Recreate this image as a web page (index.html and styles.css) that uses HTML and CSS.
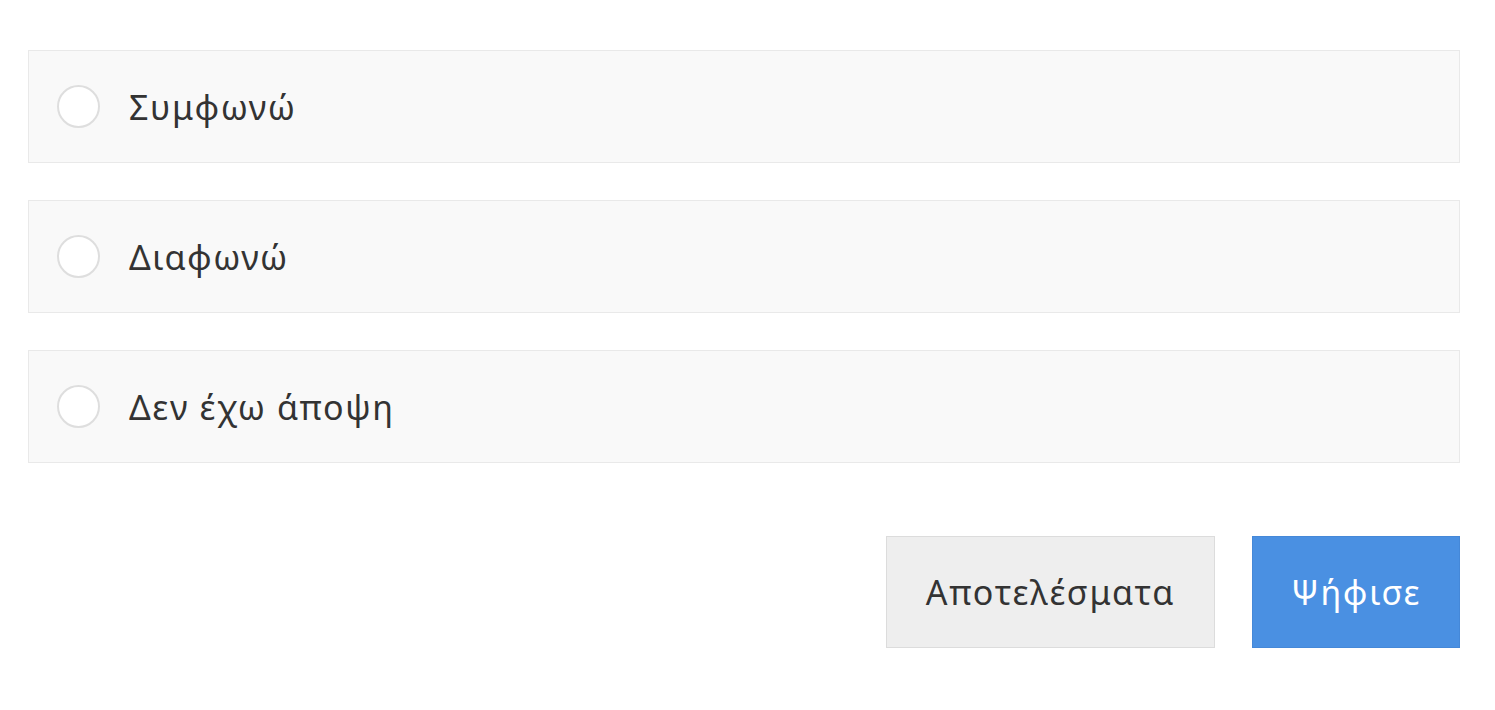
FILE: index.html
```html
<!DOCTYPE html>
<html lang="el">
<head>
<meta charset="utf-8">
<link rel="stylesheet" href="styles.css">
</head>
<body>
<form class="poll">
  <label class="option"><span class="radio"></span><span class="label">Συμφωνώ</span></label>
  <label class="option"><span class="radio"></span><span class="label">Διαφωνώ</span></label>
  <label class="option"><span class="radio"></span><span class="label">Δεν έχω άποψη</span></label>
  <div class="actions">
    <button type="button" class="btn btn-results">Αποτελέσματα</button>
    <button type="button" class="btn btn-vote">Ψήφισε</button>
  </div>
</form>
</body>
</html>
```
FILE: styles.css
```css
html, body {
  margin: 0;
  padding: 0;
  background: #ffffff;
}
body {
  font-family: "Noto Sans", "DejaVu Sans", sans-serif;
  color: #333333;
}
.poll {
  padding: 50px 35px 0 28px;
  display: flex;
  flex-direction: column;
  gap: 37px;
}
.option {
  display: flex;
  align-items: center;
  height: 111px;
  background: #f9f9f9;
  border: 1px solid #e9e9e9;
  padding-left: 28px;
}
.radio {
  width: 39px;
  height: 39px;
  border: 2px solid #dedede;
  border-radius: 50%;
  background: #ffffff;
  flex: none;
}
.label {
  margin-left: 29px;
  font-size: 34px;
  font-weight: 400;
  letter-spacing: 1.6px;
  color: #333333;
}
.actions {
  display: flex;
  justify-content: flex-end;
  gap: 37px;
  margin-top: 36px;
}
.btn {
  font-family: "Noto Sans", "DejaVu Sans", sans-serif;
  font-size: 34px;
  font-weight: 400;
  height: 112px;
  border: 1px solid #dcdcdc;
  letter-spacing: 1.7px;
  padding: 0;
}
.btn-results {
  width: 329px;
  background: #eeeeee;
  color: #333333;
}
.btn-vote {
  width: 208px;
  background: #4a90e2;
  border-color: #4588d8;
  color: #ffffff;
}
```
